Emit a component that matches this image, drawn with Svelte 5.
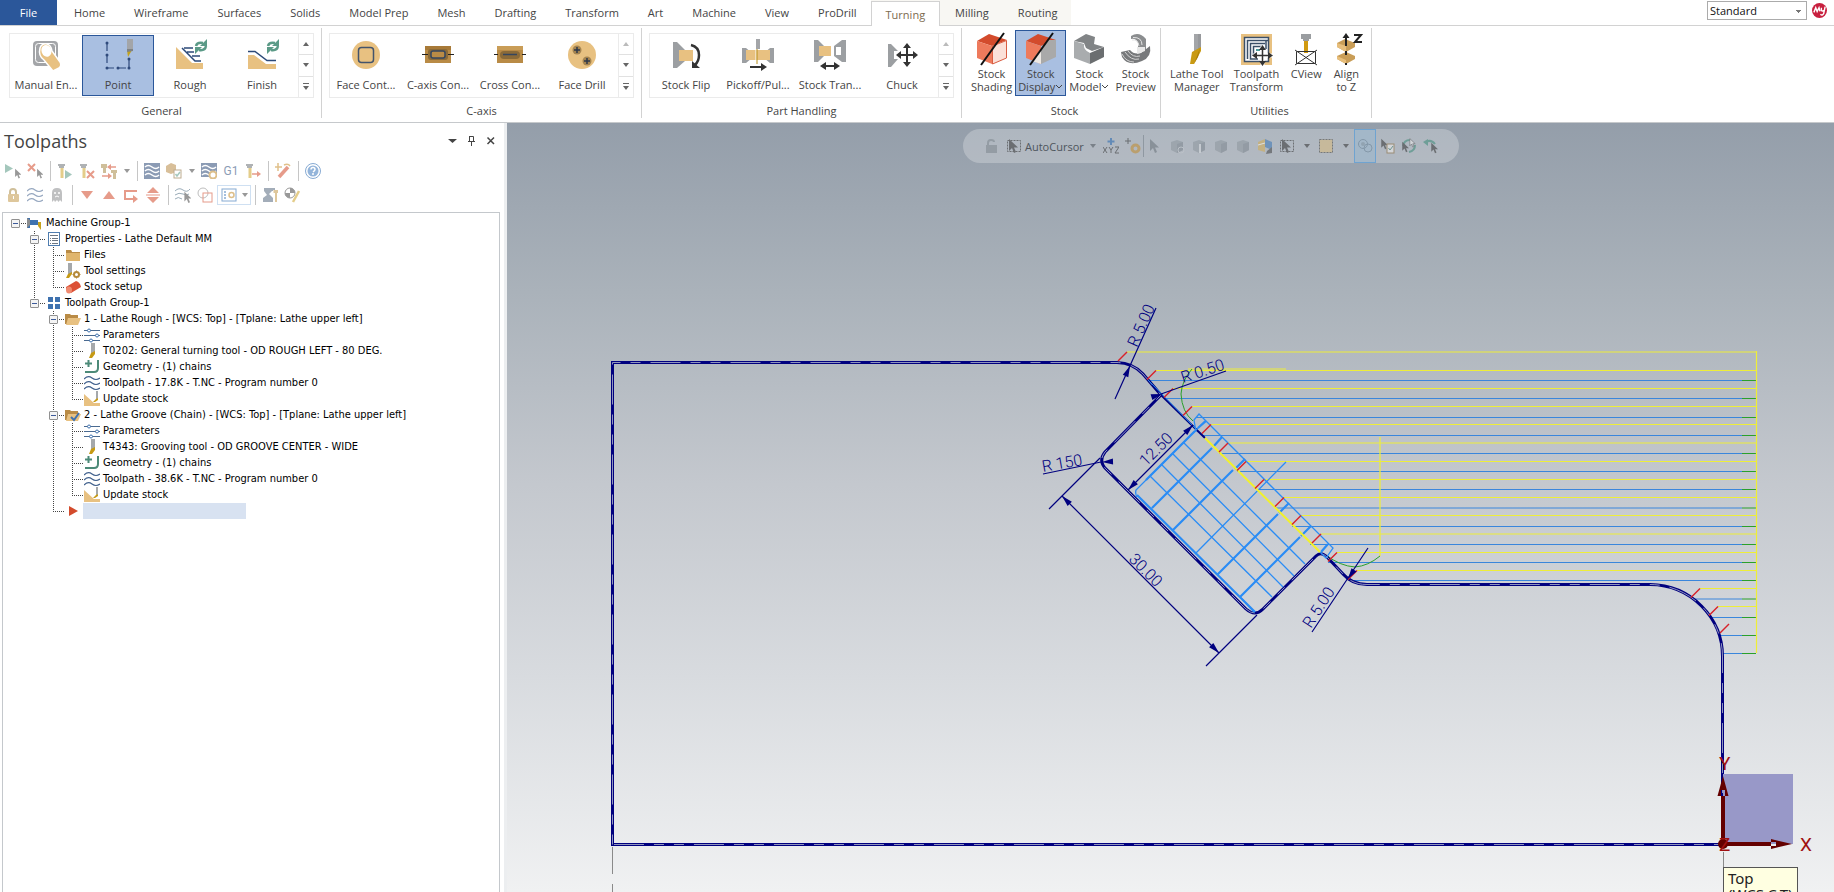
<script lang="ts">
  type Item = { icon: string; label: string; active?: boolean; menu?: boolean };
  type Row = { guides: string; icon: string; label: string; toggle?: boolean };

  const tabs = [
    'Home', 'Wireframe', 'Surfaces', 'Solids', 'Model Prep', 'Mesh', 'Drafting',
    'Transform', 'Art', 'Machine', 'View', 'ProDrill'
  ];
  const contextTabs = ['Turning', 'Milling', 'Routing'];
  let activeTab = $state('Turning');

  const galleries: { name: string; atTop: boolean; items: Item[] }[] = [
    {
      name: 'General',
      atTop: false,
      items: [
        { icon: 'manual', label: 'Manual En...' },
        { icon: 'point', label: 'Point', active: true },
        { icon: 'rough', label: 'Rough' },
        { icon: 'finish', label: 'Finish' }
      ]
    },
    {
      name: 'C-axis',
      atTop: true,
      items: [
        { icon: 'faceContour', label: 'Face Cont...' },
        { icon: 'caxisContour', label: 'C-axis Con...' },
        { icon: 'crossContour', label: 'Cross Con...' },
        { icon: 'faceDrill', label: 'Face Drill' }
      ]
    },
    {
      name: 'Part Handling',
      atTop: true,
      items: [
        { icon: 'stockFlip', label: 'Stock Flip' },
        { icon: 'pickoff', label: 'Pickoff/Pul...' },
        { icon: 'transfer', label: 'Stock Tran...' },
        { icon: 'chuck', label: 'Chuck' }
      ]
    }
  ];

  const stockItems: Item[] = [
    { icon: 'shading', label: 'Stock\nShading' },
    { icon: 'display', label: 'Stock\nDisplay', active: true, menu: true },
    { icon: 'model', label: 'Stock\nModel', menu: true },
    { icon: 'preview', label: 'Stock\nPreview' }
  ];
  const utilityItems: Item[] = [
    { icon: 'toolManager', label: 'Lathe Tool\nManager' },
    { icon: 'transform', label: 'Toolpath\nTransform' },
    { icon: 'cview', label: 'CView' },
    { icon: 'alignZ', label: 'Align\nto Z' }
  ];

  // '-' is a separator, 'v' a drop-down arrow
  const panelTools = [
    ['selectAll', 'selectDirty', '-', 'regenAll', 'regenDirty', 'regenSwap', 'v', '-', 'backplot', 'verify', 'v', 'simulate', 'post', 'feed', '-', 'wand', '-', 'help'],
    ['lock', 'waves', 'ghost', '-', 'down', 'up', 'insert', 'scroll', '-', 'onlySelected', 'onlyAssoc', 'options', '-', 'machineSim', 'checker']
  ];
  const cursorTools = [
    'arrow', 'cubeEdge', 'cubeFace', 'cube', 'cube', 'cubeColor', 'boxCursor', 'v',
    'window', 'v', 'rings', 'cursorCheck', 'cursorCycle', 'cursorBack'
  ];

  // guide cells: '.' blank, '|' through line, '+' branch, 'L' last branch, 'F' first
  const rows: Row[] = [
    { guides: 'F', icon: 'machine', label: 'Machine Group-1', toggle: true },
    { guides: '.+', icon: 'properties', label: 'Properties - Lathe Default MM', toggle: true },
    { guides: '.|+', icon: 'folder', label: 'Files' },
    { guides: '.|+', icon: 'toolGear', label: 'Tool settings' },
    { guides: '.|L', icon: 'stock', label: 'Stock setup' },
    { guides: '.L', icon: 'group', label: 'Toolpath Group-1', toggle: true },
    { guides: '..+', icon: 'folderOpen', label: '1 - Lathe Rough - [WCS: Top] - [Tplane: Lathe upper left]', toggle: true },
    { guides: '..|+', icon: 'params', label: 'Parameters' },
    { guides: '..|+', icon: 'tool', label: 'T0202: General turning tool - OD ROUGH LEFT - 80 DEG.' },
    { guides: '..|+', icon: 'geometry', label: 'Geometry - (1) chains' },
    { guides: '..|+', icon: 'waves', label: 'Toolpath - 17.8K - T.NC - Program number 0' },
    { guides: '..|L', icon: 'update', label: 'Update stock' },
    { guides: '..+', icon: 'folderCheck', label: '2 - Lathe Groove (Chain) - [WCS: Top] - [Tplane: Lathe upper left]', toggle: true },
    { guides: '..|+', icon: 'params', label: 'Parameters' },
    { guides: '..|+', icon: 'tool', label: 'T4343: Grooving tool - OD GROOVE CENTER - WIDE' },
    { guides: '..|+', icon: 'geometry', label: 'Geometry - (1) chains' },
    { guides: '..|+', icon: 'waves', label: 'Toolpath - 38.6K - T.NC - Program number 0' },
    { guides: '..|L', icon: 'update', label: 'Update stock' },
    { guides: '..L', icon: 'insertArrow', label: '' }
  ];

  // roughing passes: [y, start x]
  const rapids = [
    [352, 1127], [370.5, 1156], [388.5, 1173], [406.5, 1192], [424.5, 1211], [443, 1228],
    [461.5, 1246], [479.5, 1264], [497.5, 1284], [515.5, 1301], [534, 1321], [552.5, 1337],
    [570.5, 1357], [588.5, 1700], [606.5, 1718]
  ];
  const cuts = [
    [380.5, 1148], [398.5, 1165], [417.5, 1196], [435.5, 1203], [453.5, 1219], [471.5, 1237],
    [489.5, 1258], [508, 1276], [526.5, 1292], [544.5, 1310], [562.5, 1328], [580.5, 1354],
    [599, 1695], [617.5, 1711], [635.5, 1720], [653.5, 1723]
  ];
  const outline =
    'M612.500 844.500 V362.500 H1117 Q1133 363 1143 374 L1161 395 L1105 452 Q1098 461 1106 469 L1246 609 Q1255 617 1263 609 L1316 556 Q1321 551 1327 557 L1343 574 Q1352 584.500 1367 584.500 H1650 A73 72 0 0 1 1722.500 657 V844.500 Z';

  const arrowPath = 'M3 1 V13 L6 10 L8 15 L10 14 L8 9.500 H12 Z';
  const cubeBase =
    '<path d="M2 4 8 2 14 4V12L8 15 2 12Z" fill="#8d969e"/><path d="M8 6V15L14 12V4Z" fill="#7b858e"/>';
  const holder = '<path d="M1 1H8V3H7V5H2V3H1Z" fill="#6f7477"/><rect x="3.500" y="5" width="3" height="10" fill="#cfa52c"/>';
  const swirl =
    '<path d="M22 7Q23 3 29 4M32 7Q31 12 25 11" fill="none" stroke="#5b9a87" stroke-width="2.500"/><path d="M33 0V7H26ZM21 15V8H28Z" fill="#5b9a87"/>';

  const icons: Record<string, string> = {
    manual:
      '<rect x="3" y="2" width="25" height="25" rx="4" fill="#a3a5a8"/><rect x="5.500" y="4.500" width="20" height="19" rx="3" fill="none" stroke="#fff"/><path d="M10 9Q12 4 17 5Q21 6 22 12L30 23Q32 27 29 29L23 32L14 21Q8 17 10 9Z" fill="#e8c181" stroke="#fff" stroke-width="1.500"/><ellipse cx="16.500" cy="12" rx="5" ry="6" fill="#fff" transform="rotate(-20 16 12)"/>',
    point:
      '<path d="M5 4V29H27V20" fill="none" stroke="#2f4a7c" stroke-width="1.200" stroke-dasharray="8 4"/><g fill="#2f4a7c"><circle cx="5" cy="4" r="1.500"/><circle cx="5" cy="16" r="1.500"/><circle cx="5" cy="29" r="1.500"/><circle cx="16" cy="29" r="1.500"/><circle cx="27" cy="29" r="1.500"/><circle cx="27" cy="20" r="1.500"/></g><path d="M25 0H31V11L28 13 25 11Z" fill="#a3a5a8"/><path d="M25 11H30L26 18Z" fill="#c2a21c"/><path d="M25 10H31V12L25 13Z" fill="#7f8284"/>',
    rough:
      `<path d="M2 8 18 24H29V30H2Z" fill="#e8c181"/><path d="M8 9 21 22H27M10 9H19M13 13H20M18 17H26" fill="none" stroke="#2d4a78" stroke-width="1.500"/>${swirl}`,
    finish:
      `<path d="M2 16H8L20 25H30V30H2Z" fill="#e8c181"/><path d="M2 12.500H9L21 21.500H30" fill="none" stroke="#2d4a78" stroke-width="1.500"/>${swirl}`,
    faceContour:
      '<circle cx="16" cy="16" r="14" fill="#e8c181"/><rect x="8.500" y="8.500" width="15" height="15" rx="3" fill="none" stroke="#44546b" stroke-width="1.500"/>',
    caxisContour:
      '<rect x="3" y="7" width="26" height="17" fill="#b98b46"/><rect x="3" y="7" width="26" height="4" fill="#a87a38"/><rect x="6" y="10" width="20" height="11" rx="3" fill="#8a6a38"/><rect x="9" y="12" width="14" height="7" rx="2" fill="#b98b46" stroke="#34465f" stroke-width="1.500"/><path d="M0 15.500H6M26 15.500H32" stroke="#222"/>',
    crossContour:
      '<rect x="3" y="7" width="26" height="17" fill="#b98b46"/><rect x="3" y="7" width="26" height="4" fill="#c99d57"/><rect x="6" y="12" width="20" height="8" rx="4" fill="#8a6a38"/><path d="M9 15.500H23" stroke="#34465f" stroke-width="1.500"/><path d="M0 15.500H4M28 15.500H32" stroke="#222"/>',
    faceDrill:
      '<circle cx="16" cy="16" r="14" fill="#e8c181"/><circle cx="11" cy="11" r="4.500" fill="#a58450"/><circle cx="21" cy="22" r="4.500" fill="#a58450"/><path d="M11 8V14M8 11H14M21 19V25M18 22H24" stroke="#2d3748" stroke-width="1.500"/>',
    stockFlip:
      '<path d="M3 3H7L15 11V22L7 29H3Z" fill="#9c9fa2"/><rect x="9" y="11" width="14" height="11" fill="#e8c181"/><path d="M21 6Q29 8 29 16Q29 22 25 26" fill="none" stroke="#333" stroke-width="2.500"/><path d="M22 22V29H30Z" fill="#333"/>',
    pickoff:
      '<path d="M0 9H4L10 14V19L4 24H0ZM32 9H28L22 14V19L28 24H32Z" fill="#9c9fa2"/><rect x="4" y="11" width="24" height="10" fill="#e8c181"/><rect x="14" y="0" width="4" height="10" fill="#a3a5a8"/><path d="M14 10V25" stroke="#fff"/><path d="M15 10V25" stroke="#b8901a"/><path d="M8 28H20" stroke="#333" stroke-width="2"/><path d="M19 24 25 28 19 32Z" fill="#333"/>',
    transfer:
      '<path d="M0 1H4L10 7V17L4 23H0Z" fill="#9c9fa2"/><path d="M32 1H28L20 7V17L28 23H32ZM27 8V16H22V8Z" fill="#9c9fa2" fill-rule="evenodd"/><rect x="5" y="7" width="12" height="10" fill="#e8c181"/><path d="M9 27H23" stroke="#333" stroke-width="2"/><path d="M12 23V31L6 27ZM20 23V31L26 27Z" fill="#333"/>',
    chuck:
      '<path d="M2 5H5L12 12H8V20H12L5 28H2Z" fill="#9c9fa2"/><path d="M13 16H29M21 8V24" stroke="#333" stroke-width="2"/><path d="M17 9H25L21 4ZM17 23H25L21 28ZM15 12V20L10 16ZM27 12V20L32 16Z" fill="#333"/>',
    shading:
      '<path d="M1 8 13 1 31 7 16 13Z" fill="#d34b2c"/><path d="M1 8 16 13V31L1 25Z" fill="#ee7a5c"/><path d="M16.500 13 30.500 7.500V25L16.500 31Z" fill="#fbe0d8" stroke="#d95d42"/><path d="M5 32 28 0" stroke="#111" stroke-width="2"/>',
    display:
      '<path d="M1 8 13 1 31 7 16 13Z" fill="#d34b2c"/><path d="M1 8 16 13V31L1 25Z" fill="#ee7a5c"/><path d="M16 15 23 7 31 7V24L16 31Z" fill="#a9a9a9"/><path d="M16 16V31L7 28Z" fill="#ece8e4"/><path d="M5 32 28 0" stroke="#111" stroke-width="2"/>',
    model:
      '<path d="M1 8 13 1 22 4 21 11 31 14 19 18 13 15 11 10Z" fill="#818486"/><path d="M1 8 11 11Q10 17 17 20V31L1 25Z" fill="#a9acae"/><path d="M17 20 31 14V24L17 31Z" fill="#6b6e70"/>',
    preview:
      '<path d="M11 3Q19 -2 26 6V18H18V10Q16 5 11 6Z" fill="#8b8d8f"/><path d="M12 7Q18 6 19 13M13 4.500Q22 4 22 12" fill="none" stroke="#e4e4e4"/><path d="M1 19 10 17Q14 22 21 20L30 13Q32 24 22 28Q8 34 2 24Z" fill="#77797b"/><path d="M17 14H25V18L17 21Z" fill="#e8e8e8"/><path d="M2 21Q6 29 14 29M5 19Q11 28 19 26M8 18Q13 25 20 23" fill="none" stroke="#d2d2d2"/>',
    toolManager: '<path d="M13 1H20V16L13 20Z" fill="#a3a5a8"/><path d="M20 1V14L17 17V1Z" fill="#97999c"/><path d="M20 14V18L13 31H9L11 19Z" fill="#c99a12"/><path d="M19 15 17 24 13 31Z" fill="#a97c08"/>',
    transform:
      '<rect x="1" y="1" width="31" height="31" fill="#e8c181"/><rect x="4.500" y="4.500" width="24" height="24" fill="#fff" stroke="#3c5068" stroke-width="1.500"/><path d="M28 7.500H7.500V26M25 10.500H10.500V26H18M22 13.500H13.500V22H16M26 7.500V16" fill="none" stroke="#3c5068" stroke-width="1.500"/><path d="M16 17H20" stroke="#4d9c9c" stroke-width="2"/><path d="M13 22.500H32M22.500 13V32" stroke="#fff" stroke-width="4"/><path d="M15 22.500H30M22.500 15V30" stroke="#333" stroke-width="1.500"/><path d="M19 17H26L22.500 12ZM19 28H26L22.500 33ZM17 19V26L12 22.500ZM28 19V26L33 22.500Z" fill="#333"/>',
    cview:
      '<path d="M11 1H21V6H19V8H13V6H11Z" fill="#9a9da0"/><rect x="14" y="8" width="4" height="12" fill="#d09a10"/><path d="M6.500 18.500H25.500V30.500H6.500ZM5 17 27 32M27 17 5 32" fill="none" stroke="#333"/>',
    alignZ:
      '<path d="M7 10 15 6 25 10V14L16 19 7 14Z" fill="#c99d57"/><path d="M7 10 16 13V19L7 14Z" fill="#e7be7b"/><path d="M7 23 16 19 25 23V26L16 31 7 26Z" fill="#c99d57"/><path d="M7 23 16 27V31L7 26Z" fill="#e7be7b"/><path d="M16 5V13M16 18V22M16 30V32" stroke="#222" stroke-width="2"/><path d="M12.500 5H19.500L16 0Z" fill="#222"/><path d="M24 2H31L25 9H32" fill="none" stroke="#222" stroke-width="2"/>',

    selectAll: `<path d="M0 1 8 5.500 0 10Z" fill="#5b9a87"/><g transform="translate(8 5) scale(.7)"><path d="${arrowPath}" fill="#444"/></g>`,
    selectDirty: `<path d="M1 1 8 8M8 1 1 8" stroke="#d34b2c" stroke-width="2"/><g transform="translate(8 5) scale(.7)"><path d="${arrowPath}" fill="#444"/></g>`,
    regenAll: `${holder}<path d="M8 7 15 11.500 8 16Z" fill="#5b9a87"/>`,
    regenDirty: `${holder}<path d="M8 8 15 15M15 8 8 15" stroke="#d34b2c" stroke-width="2"/>`,
    regenSwap:
      '<path d="M0 1H6V5H5V10H2V5H0ZM10 7H16V10H15V16H12V10H10Z" fill="#a98c48"/><path d="M7 4H15M1 13H9" stroke="#d34b2c" stroke-width="1.500"/><path d="M10 1V7L6 4ZM7 10V16L11 13Z" fill="#d34b2c"/>',
    backplot:
      '<rect width="16" height="16" fill="#2d4a78"/><path d="M1 4Q4 1 8 4T15 4M1 8Q4 5 8 8T15 8M1 12Q4 9 8 12T15 12" fill="none" stroke="#fff" stroke-width="1.500"/>',
    verify:
      '<path d="M0 3 5 0 10 2V9L5 11 0 9Z" fill="#b98b46"/><rect x="8" y="7" width="7" height="8" fill="#fff" stroke="#8a6a38"/><path d="M9.500 11 11 13 14 9" fill="none" stroke="#5b9a87" stroke-width="1.500"/>',
    simulate:
      '<rect width="16" height="14" fill="#2d4a78"/><path d="M1 4Q4 1 8 4T15 4M1 8Q4 5 8 8T15 8M1 12Q4 9 8 12T15 12" fill="none" stroke="#fff" stroke-width="1.500"/><circle cx="12" cy="12" r="3.500" fill="#fff" stroke="#c28b2c" stroke-width="2"/>',
    feed: `${holder}<path d="M7 11H13" stroke="#d34b2c" stroke-width="1.500"/><path d="M12 8V14L16 11Z" fill="#d34b2c"/>`,
    wand: '<path d="M4 14 13 4" stroke="#d34b2c" stroke-width="3.500"/><path d="M3 0V8M0 4H7M9 2Q13 0 15 3" stroke="#c98f2c" fill="none" stroke-width="1.500"/>',
    help: '<circle cx="8" cy="8" r="7.500" fill="#fff" stroke="#2667b0"/><circle cx="8" cy="8" r="5.500" fill="#3c78bd"/><path d="M6 6.500Q6 4.500 8 4.500T10 6.500Q10 7.500 8 9" fill="none" stroke="#fff" stroke-width="1.500"/><circle cx="8" cy="11" r="1" fill="#fff"/>',
    lock: '<path d="M5 8V5Q5 2 8 2T11 5V8" fill="none" stroke="#a98c48" stroke-width="2"/><rect x="3" y="7" width="11" height="8" rx="1" fill="#c49a4c"/><rect x="8" y="9" width="1" height="3" fill="#fff"/>',
    waves:
      '<path d="M0 4Q4 0 8 3T16 3M0 9Q4 5 8 8T16 8M0 14Q4 10 8 13T16 13" fill="none" stroke="#3f5f8c" stroke-width="1.200"/>',
    ghost: '<path d="M3 15V6Q3 1 8 1T13 6V15L11 13 9.500 15 8 13 6 15 5 13Z" fill="#8b8d8f"/><circle cx="6" cy="6" r="1" fill="#fff"/><circle cx="10" cy="6" r="1" fill="#fff"/><path d="M6 10Q8 8 10 10" stroke="#fff" fill="none"/>',
    down: '<path d="M2 4H14L8 12Z" fill="#d34b2c"/>',
    up: '<path d="M2 12H14L8 4Z" fill="#d34b2c"/>',
    insert: '<path d="M14 4H2V12H11" fill="none" stroke="#d34b2c" stroke-width="2"/><path d="M10 8V16L15 12Z" fill="#d34b2c"/>',
    scroll: '<path d="M2 6H14L8 0ZM2 10H14L8 16ZM1 7.500H15V8.500H1Z" fill="#d34b2c"/>',
    onlySelected: `<path d="M0 4Q4 0 8 3T15 2M0 8Q4 5 8 7T14 7M0 12Q3 9 7 12" fill="none" stroke="#4a6a80"/><g transform="translate(7 4) scale(.8)"><path d="${arrowPath}" fill="#444"/></g>`,
    onlyAssoc: '<circle cx="6" cy="6" r="5" fill="none" stroke="#888"/><rect x="6" y="6" width="9" height="9" fill="none" stroke="#d34b2c"/>',
    options:
      '<rect x="1" y="2" width="14" height="12" fill="#fff" stroke="#2667b0"/><path d="M3 5H5M3 8H5M3 11H5" stroke="#2667b0" stroke-width="1.500"/><circle cx="10.500" cy="8" r="2.500" fill="none" stroke="#c28b2c" stroke-width="1.500"/>',
    machineSim:
      '<path d="M2 1H13V4H10L7 7 11 11V15H1V11L5 8 2 4Z" fill="#596b80"/><path d="M11 3H16V7H15V15H12V7H11Z" fill="#fff"/><path d="M11.500 3H16V6H15V15H13V6H11.500Z" fill="#c49a4c"/>',
    checker:
      '<circle cx="6" cy="6" r="5" fill="#fff" stroke="#444"/><path d="M6 6V1A5 5 0 0 1 11 6ZM6 6V11A5 5 0 0 1 1 6Z" fill="#444"/><path d="M15 4 9 15" stroke="#cfa52c" stroke-width="2.500"/>',

    machine: '<path d="M0 3H3V5H11V10H3V13H0Z" fill="#3f72af"/><path d="M0 3 3 5V10L0 13Z" fill="#8b8d8f"/><path d="M11 7H14V11L14 15 11 11Z" fill="#c6a21c"/>',
    properties:
      '<rect x="2.500" y="1.500" width="11" height="13" fill="#fff" stroke="#4f7db0"/><path d="M4 4.500H12M6 7.500H12M6 9.500H12M6 12.500H12M4 7.500H5M4 9.500H5M4 12.500H5" stroke="#6d7783"/>',
    folder: '<path d="M1 3H6L7 5H15V14H1Z" fill="#e0b56c"/><path d="M1 3H6L7 5H15V6H1Z" fill="#b98b46"/>',
    toolGear: '<path d="M3 0H7V10L3 12Z" fill="#a5a8ab"/><path d="M7 9V11L4 15H1L3 11Z" fill="#c69a14"/><circle cx="11.500" cy="11.500" r="2.500" fill="#fff" stroke="#b58a3c" stroke-width="2"/><path d="M11.500 7.500V15.500M7.500 11.500H15.500" stroke="#b58a3c" stroke-dasharray="1.500 5"/>',
    stock: '<path d="M1 8 11 2Q15 3 16 8L6 14Q1 14 1 8Z" fill="#dc5136"/><ellipse cx="4" cy="11" rx="3" ry="3.500" fill="#f08a70"/>',
    group: '<path d="M2 2H7V7H2ZM9 2H14V7H9ZM2 9H7V14H2ZM9 9H14V14H9Z" fill="#3f72af"/>',
    folderOpen: '<path d="M0 3H5L6 4H13V13H0Z" fill="#b98b46"/><path d="M3 7H16L13 14H1Z" fill="#e8c181"/>',
    folderCheck: '<path d="M0 3H5L6 4H13V13H0Z" fill="#b98b46"/><path d="M3 7H16L13 14H1Z" fill="#e8c181"/><path d="M6 10 9 13 14 6" fill="none" stroke="#3f72af" stroke-width="2"/>',
    params: '<path d="M0 3.500H16M0 8.500H16M0 13.500H16" stroke="#4a6a90"/><g fill="#fff" stroke="#3f72af"><circle cx="5" cy="3.500" r="1.500"/><circle cx="13" cy="8.500" r="1.500"/><circle cx="7" cy="13.500" r="1.500"/></g>',
    tool: '<path d="M7 0H11V9L7 11Z" fill="#a5a8ab"/><path d="M11 8V11L8 15H5L7 10Z" fill="#c69a14"/>',
    geometry: '<path d="M14 1V9Q14 13 10 13H1" fill="none" stroke="#4c8a78" stroke-width="2"/><path d="M4.500 1V8M1 4.500H8" stroke="#4c8a78" stroke-width="2"/>',
    update: '<path d="M0 3 10 12H16V15H0Z" fill="#e8c181"/><path d="M12 0H14V7L12 9Z" fill="#a5a8ab"/><path d="M14 7V9L11 11H9L12 8Z" fill="#c69a14"/>',
    insertArrow: '<path d="M4 3 13 8 4 13Z" fill="#d34b2c"/>',

    unlock: '<path d="M5 8V5Q5 2 8 2T11 4" fill="none" stroke="#7d868e" stroke-width="2"/><rect x="3" y="7" width="11" height="8" fill="#7d868e"/>',
    boxCursor: `<rect x="1.500" y="2.500" width="13" height="11" fill="none" stroke="#333" stroke-dasharray="2 1"/><path d="${arrowPath}" fill="#333"/>`,
    xyz: '<path d="M8 0V7M4.500 3.500H11.500" stroke="#2667b0" stroke-width="2"/><path d="M0 9 4 15M4 9 0 15M6 9 8 12V15M8 12 10 9M12 9H16L12 15H16" stroke="#333" fill="none"/>',
    plusGear: '<path d="M3 0V6M0 3H6" stroke="#333"/><circle cx="10.500" cy="10.500" r="3.500" fill="none" stroke="#c28b2c" stroke-width="3"/>',
    arrow: `<path d="${arrowPath}" fill="#69727a"/>`,
    cubeEdge: `${cubeBase}<circle cx="12" cy="12" r="3" fill="none" stroke="#c3c8cd"/>`,
    cubeFace: `${cubeBase}<path d="M9 6V15" stroke="#d6dade" stroke-width="2"/>`,
    cube: cubeBase,
    cubeColor: '<path d="M1 4 8 1V14L1 12Z" fill="#d3ac52"/><path d="M8 1 15 4V12L8 9Z" fill="#3a76b6"/><path d="M1 7 8 5" stroke="#fff"/><path d="M10 13 15 9V15L9 16Z" fill="#444"/>',
    window: '<rect x="1.500" y="1.500" width="13" height="13" fill="#d9bb7d" stroke="#444" stroke-dasharray="2 1"/>',
    rings: '<circle cx="6" cy="6" r="4.500" fill="none" stroke="#6b7f90"/><circle cx="11" cy="10" r="4" fill="none" stroke="#6b7f90"/><circle cx="6" cy="6" r="2" fill="#8494a0"/>',
    cursorCheck: `<g transform="scale(.75)"><path d="${arrowPath}" fill="#333"/></g><rect x="8" y="6" width="7" height="9" fill="#eee" stroke="#8a6a38"/><path d="M9.500 10 11 12 14 8" fill="none" stroke="#3a7a67"/>`,
    cursorCycle: `<path d="M2 8Q3 2 9 2M14 7Q14 13 8 14" fill="none" stroke="#3a8a77" stroke-width="2"/><g transform="translate(-1 3) scale(.75)"><path d="${arrowPath}" fill="#333"/></g><g transform="translate(7 0) scale(.6)"><path d="${arrowPath}" fill="#eee" stroke="#333"/></g>`,
    cursorBack: `<path d="M3 4Q8 1 12 6" fill="none" stroke="#3a8a77" stroke-width="2"/><path d="M0 4 5 1V8Z" fill="#3a8a77"/><g transform="translate(6 4) scale(.75)"><path d="${arrowPath}" fill="#333"/></g>`
  };
</script>

{#snippet large(name: string)}
  <svg class="icon-large" viewBox="0 0 32 32" aria-hidden="true">{@html icons[name]}</svg>
{/snippet}

{#snippet small(name: string)}
  <svg class="icon-small" viewBox="0 0 16 16" aria-hidden="true">{@html icons[name]}</svg>
{/snippet}

{#snippet caret()}
  <svg class="caret" viewBox="0 0 6 4" aria-hidden="true"><path d="M0 0H6L3 4Z" fill="currentColor" /></svg>
{/snippet}

{#snippet bigButtons(items: Item[])}
  {#each items as item}
    <button type="button" class="big-button" class:active={item.active}>
      {@render large(item.icon)}
      <span class="big-label">{item.label}{#if item.menu}<svg class="chevron" viewBox="0 0 7 5" aria-hidden="true"><path d="M0 1 3 4 6 1" fill="none" stroke="currentColor" /></svg>{/if}</span>
    </button>
  {/each}
{/snippet}

{#snippet label(x: number, y: number, angle: number, text: string)}
  <text class="dim-text" transform="translate({x} {y}) rotate({angle})">{text}</text>
{/snippet}

{#snippet head(x: number, y: number, angle: number)}
  <path class="dim-head" d="M0 0 L-11 -3 V3 Z" transform="translate({x} {y}) rotate({angle})" />
{/snippet}

<div class="app">
  <header>
    <nav class="tabs">
      <button type="button" class="file-tab">File</button>
      {#each tabs as tab}
        <button type="button" class="tab" onclick={() => (activeTab = tab)}>{tab}</button>
      {/each}
      <div class="context-tabs">
        {#each contextTabs as tab}
          <button type="button" class="tab" class:current={tab === activeTab} onclick={() => (activeTab = tab)}>{tab}</button>
        {/each}
      </div>
      <div class="tabs-end">
        <select aria-label="Ribbon layout"><option>Standard</option></select>
        <svg class="brand" viewBox="0 0 16 16" aria-hidden="true">
          <circle cx="8" cy="8" r="8" fill="#c8203f" />
          <path d="M2 10 4 5 5.500 9 7.500 5 8.500 9M10 5V8Q11 9 13 8M14 4 12.500 11Q11 14 9 12" fill="none" stroke="#fff" stroke-width="1.500" />
        </svg>
      </div>
    </nav>

    <div class="ribbon">
      {#each galleries as gallery}
        <section class="group">
          <div class="gallery">
            {#each gallery.items as item}
              <button type="button" class="gallery-item" class:active={item.active}>
                {@render large(item.icon)}
                <span>{item.label}</span>
              </button>
            {/each}
            <div class="spinner">
              <button type="button" aria-label="Previous row" class:dim={gallery.atTop}>
                <svg class="caret" viewBox="0 0 6 4"><path d="M0 4H6L3 0Z" fill="currentColor" /></svg>
              </button>
              <button type="button" aria-label="Next row">{@render caret()}</button>
              <button type="button" aria-label="More">
                <svg class="more" viewBox="0 0 6 7"><path d="M0 0H6V1H0ZM0 3H6L3 7Z" fill="currentColor" /></svg>
              </button>
            </div>
          </div>
          <h2>{gallery.name}</h2>
        </section>
      {/each}
      <section class="group stock-group">
        <div class="big-row">{@render bigButtons(stockItems)}</div>
        <h2>Stock</h2>
      </section>
      <section class="group utility-group">
        <div class="big-row">{@render bigButtons(utilityItems)}</div>
        <h2>Utilities</h2>
      </section>
    </div>
  </header>

  <main>
    <aside>
      <div class="panel-head">
        <h1>Toolpaths</h1>
        <button type="button" aria-label="Panel menu">
          <svg viewBox="0 0 10 10"><path d="M0 3H9L4.500 7Z" fill="#444" /></svg>
        </button>
        <button type="button" aria-label="Pin panel">
          <svg viewBox="0 0 10 10"><path d="M2.500 .500H6.500V5.500M2.500 0V5.500M1 5.500H8M4.500 6V10" fill="none" stroke="#444" /></svg>
        </button>
        <button type="button" aria-label="Close panel">
          <svg viewBox="0 0 10 10"><path d="M1.500 1.500 8 8M8 1.500 1.500 8" fill="none" stroke="#444" stroke-width="1.500" /></svg>
        </button>
      </div>

      {#each panelTools as line}
        <div class="tool-row">
          {#each line as tool}
            {#if tool === '-'}
              <span class="separator"></span>
            {:else if tool === 'v'}
              <button type="button" class="tool-caret" aria-label="More options">{@render caret()}</button>
            {:else if tool === 'options'}
              <button type="button" class="tool boxed" aria-label="Display options">{@render small(tool)}{@render caret()}</button>
            {:else if tool === 'post'}
              <button type="button" class="tool post">G1</button>
            {:else}
              <button type="button" class="tool" aria-label={tool}>{@render small(tool)}</button>
            {/if}
          {/each}
        </div>
      {/each}

      <ul class="tree">
        {#each rows as row}
          <li>
            {#each row.guides as guide, i}
              <span
                class="guide"
                class:through={guide === '|' || guide === '+'}
                class:last={guide === 'L'}
                class:branch={guide === '+' || guide === 'L' || guide === 'F'}
              >
                {#if row.toggle && i === row.guides.length - 1}
                  <button type="button" class="toggle" aria-label="Collapse {row.label}"></button>
                {/if}
              </span>
            {/each}
            <span class="node-icon">{@render small(row.icon)}</span>
            {#if row.label}
              <span class="node-label">{row.label}</span>
            {:else}
              <span class="insert-bar"></span>
            {/if}
          </li>
        {/each}
      </ul>
    </aside>

    <div class="viewport">
      <svg class="drawing" viewBox="507 123 1327 769" preserveAspectRatio="xMinYMin slice">
        <g class="aux">
          <path d="M612.500 847V874M612.500 884V892M1723.500 852V882" />
        </g>

        <g class="cut">
          {#each cuts as [y, x]}
            <path d="M{x} {y}H1742" />
            <path class="exit" d="M1742 {y}H1756" />
          {/each}
        </g>
        <g class="rapid">
          {#each rapids as [y, x]}
            <path d="M{x} {y}H1756" />
          {/each}
          <path d="M1756.500 351V653M1188 369H1286M1380 437V556" />
        </g>
        <path class="exit" d="M1192 369Q1182 380 1181 394Q1182 412 1193 421M1326 555Q1340 566 1355 567Q1368 566 1380 556" />

        <path class="outline" d={outline} />
        <path class="outline-core" d={outline} />
        <path class="chain" d="M1161 395L1205 438" />
        <path class="chain-hot" d="M1148 380L1196 429" />

        <g class="groove">
          <path d="M1205 420L1199 414L1194 420L1196 432M1199 414L1333 548L1326 558L1320 552" />
          <path class="bold" d="M1195 431L1146 480M1212 448L1152 508M1233 470L1173 530M1278 514L1218 574M1300 537L1240 597M1137 495L1255 612" />
          <path d="M1195 431L1136 490Q1135 494 1137 497M1286 462L1195 554M1195 431L1205 421M1183 442L1305 564M1172 453L1294 576M1161 464L1283 587M1150 476L1272 597M1240 597L1254 612" />
          <path class="bold" d="M1198 428L1206 421M1213 447L1222 437M1235 469L1245 459M1279 513L1289 503M1301 536L1311 526M1321 552L1328 544" />
        </g>
        <path class="chain-rapid" d="M1205 438L1320 552" />
        <g class="entry">
          {#each rapids as [y, x]}
            <path d="M{x - 9} {y + 9}L{x} {y}" />
          {/each}
          <path d="M1720 633L1729 624" />
        </g>

        <g class="dimension">
          <path d="M1062 496L1219 653M1100 458L1049 509M1257 615L1206 666" />
          <path d="M1193 425L1128 490M1043 474L1101 462M1226 371L1161 394" />
          <path d="M1156 308L1115 399M1368 548L1312 632" />
          {@render head(1062, 496, 225)}
          {@render head(1219, 653, 45)}
          {@render head(1193, 425, -45)}
          {@render head(1128, 490, 135)}
          {@render head(1102, 462, 178)}
          {@render head(1162, 394, -17)}
          {@render head(1130, 366, -66)}
          {@render head(1348, 579, 123)}
          {@render label(1128, 560, 45, '30.00')}
          {@render label(1146, 467, -45, '12.50')}
          {@render label(1043, 472, -10, 'R 150')}
          {@render label(1183, 383, -18, 'R 0.50')}
          {@render label(1137, 348, -66, 'R 5.00')}
          {@render label(1311, 629, -57, 'R 5.00')}
        </g>

        <g class="gnomon">
          <rect x="1723" y="774" width="70" height="70" />
          <path d="M1721 844V790H1725V844ZM1717.500 796H1728.500L1723 776ZM1723 842H1776V846H1723ZM1771 839V849L1792 844Z" />
          <circle cx="1723" cy="844" r="5" />
          <text x="1719" y="770">Y</text>
          <text x="1800" y="851">X</text>
          <text x="1719" y="851">Z</text>
        </g>
      </svg>

      <div class="cursor-bar">
        <button type="button" class="tool" aria-label="Lock cursor">{@render small('unlock')}</button>
        <button type="button" class="autocursor">{@render small('boxCursor')}<span>AutoCursor</span>{@render caret()}</button>
        <button type="button" class="tool" aria-label="Fast point">{@render small('xyz')}</button>
        <button type="button" class="tool divided" aria-label="Cursor settings">{@render small('plusGear')}</button>
        {#each cursorTools as tool}
          {#if tool === 'v'}
            <button type="button" class="tool-caret" aria-label="More options">{@render caret()}</button>
          {:else}
            <button type="button" class="tool" class:pressed={tool === 'rings'} aria-label={tool}>{@render small(tool)}</button>
          {/if}
        {/each}
      </div>

      <div class="tooltip" role="tooltip">Top<br />(WCS,C,T)</div>
    </div>
  </main>
</div>

<style>
  :global(body) {
    background: #fff;
    overflow: hidden;
  }
  .app {
    display: flex;
    flex-direction: column;
    height: 100vh;
    overflow: hidden;
    color: #444;
    font-family: 'Open Sans', 'Noto Sans', sans-serif;
    font-size: 11px;
  }
  button {
    padding: 0;
    border: 0;
    background: none;
    color: inherit;
    font: inherit;
  }
  h1,
  h2 {
    margin: 0;
    font-weight: 400;
  }
  svg {
    display: block;
    flex: none;
  }
  .icon-large {
    width: 32px;
    height: 32px;
    overflow: visible;
  }
  .icon-small {
    width: 16px;
    height: 16px;
  }
  .caret {
    width: 6px;
    height: 4px;
  }
  .more {
    width: 6px;
    height: 7px;
  }

  /* tab strip */
  .tabs {
    display: flex;
    height: 25px;
    border-bottom: 1px solid #d2d2d2;
  }
  .file-tab {
    width: 57px;
    margin-right: 2px;
    background: #2b579a;
    color: #fff;
  }
  .tab {
    height: 25px;
    padding: 0 14px 0 15px;
  }
  .context-tabs {
    display: flex;
    background: #f8f7f3;
  }
  .tab.current {
    height: 25px;
    margin-top: 1px;
    padding: 0 14px;
    border: 1px solid #d2d2d2;
    border-bottom: 0;
    background: #fff;
    color: #7d6b50;
  }
  .tabs-end {
    display: flex;
    align-items: flex-start;
    gap: 5px;
    margin-left: auto;
    padding: 1px 7px 0 0;
  }
  select {
    width: 100px;
    height: 19px;
    padding: 0 0 0 2px;
    border: 1px solid #ababab;
    appearance: none;
    background:
      linear-gradient(#777, #777) right 5px top 8px / 5px 1px no-repeat,
      linear-gradient(#777, #777) right 6px top 9px / 3px 1px no-repeat,
      linear-gradient(#777, #777) right 7px top 10px / 1px 1px no-repeat,
      #fff;
    color: #111;
    font: inherit;
  }
  .brand {
    width: 15px;
    height: 15px;
    margin-top: 2px;
  }

  /* ribbon */
  .ribbon {
    display: flex;
    height: 96px;
    border-bottom: 1px solid #c6c9cc;
  }
  .group {
    position: relative;
    box-sizing: border-box;
    display: flex;
    flex-direction: column;
    width: 320px;
    padding: 7px 8px 0 7px;
  }
  .group::after {
    content: '';
    position: absolute;
    top: 2px;
    right: 0;
    bottom: 4px;
    width: 1px;
    background: #d2d2d2;
  }
  .group:first-child {
    width: 322px;
    padding-left: 9px;
  }
  .group h2 {
    margin-top: auto;
    padding-bottom: 3px;
    font-size: 11px;
    line-height: 16px;
    text-align: center;
  }
  .gallery {
    box-sizing: border-box;
    display: flex;
    height: 65px;
    padding-top: 1px;
    border: 1px solid #ebebeb;
  }
  .gallery-item {
    box-sizing: border-box;
    display: flex;
    flex: 1;
    flex-direction: column;
    align-items: center;
    height: 61px;
    padding-top: 3px;
    gap: 6px;
    border: 1px solid transparent;
    line-height: 16px;
    white-space: nowrap;
  }
  .gallery-item.active,
  .big-button.active {
    border-color: #2b579a;
    background: #a9bfe1;
  }
  .spinner {
    display: flex;
    flex-direction: column;
    width: 14px;
    margin-top: -1px;
    border-left: 1px solid #ebebeb;
    color: #666;
  }
  .spinner button {
    display: grid;
    flex: 1;
    place-items: center;
  }
  .spinner button + button {
    border-top: 1px solid #e1e1e1;
  }
  .spinner .dim {
    color: #bbb;
  }
  .stock-group {
    width: 199px;
    padding: 4px 0 0 6px;
  }
  .utility-group {
    width: 211px;
    padding: 4px 0 0 6px;
  }
  .big-row {
    display: flex;
    height: 66px;
  }
  .big-button {
    box-sizing: border-box;
    display: flex;
    flex-direction: column;
    align-items: center;
    min-width: 40px;
    padding: 2px 2px 0;
    gap: 2px;
    border: 1px solid transparent;
    line-height: 13px;
  }
  .big-label {
    white-space: pre;
  }
  .chevron {
    display: inline-block;
    width: 7px;
    height: 5px;
    margin: 0 0 2px 1px;
  }

  /* toolpath manager */
  main {
    display: flex;
    flex: 1;
    min-height: 0;
  }
  aside {
    box-sizing: border-box;
    display: flex;
    flex-direction: column;
    flex: none;
    width: 507px;
    padding-right: 4px;
    border-right: 3px solid #eceef0;
  }
  .panel-head {
    display: flex;
    align-items: center;
    height: 36px;
    padding: 0 0 0 4px;
  }
  .panel-head h1 {
    margin-right: auto;
    font-size: 18px;
    line-height: 24px;
  }
  .panel-head button {
    display: grid;
    width: 19px;
    place-items: center;
  }
  .panel-head svg {
    width: 10px;
    height: 10px;
  }
  .tool-row {
    display: flex;
    align-items: center;
    height: 24px;
    padding-left: 2px;
    opacity: 0.55;
  }
  .tool {
    box-sizing: border-box;
    display: grid;
    width: 22px;
    height: 22px;
    place-items: center;
  }
  .tool-caret {
    display: grid;
    width: 13px;
    height: 22px;
    place-items: center;
  }
  .separator {
    width: 1px;
    height: 20px;
    margin: 0 3px 0 4px;
    background: #999;
  }
  .boxed {
    display: flex;
    align-items: center;
    justify-content: center;
    gap: 5px;
    width: 34px;
    height: 20px;
    margin-left: 1px;
    border: 1px solid #a8c8e8;
  }
  .post {
    color: #2d4a78;
    font-family: Roboto, sans-serif;
    font-size: 12px;
  }
  .tree {
    flex: 1;
    margin: 5px 0 0 2px;
    padding: 2px 0 0 3px;
    border: 1px solid #c4c8cc;
    border-bottom: 0;
    list-style: none;
    color: #000;
    font-family: 'DejaVu Sans Condensed', 'DejaVu Sans', sans-serif;
    font-size: 11px;
  }
  .tree li {
    display: flex;
    align-items: center;
    height: 16px;
    white-space: nowrap;
  }
  .guide {
    position: relative;
    width: 19px;
    height: 16px;
  }
  .through::before,
  .last::before {
    content: '';
    position: absolute;
    top: 0;
    left: 9px;
    width: 1px;
    height: 16px;
    background: repeating-linear-gradient(#444 0 1px, transparent 1px 2px);
  }
  .last::before {
    height: 8px;
  }
  .branch::after {
    content: '';
    position: absolute;
    top: 8px;
    left: 9px;
    width: 11px;
    height: 1px;
    background: repeating-linear-gradient(90deg, #444 0 1px, transparent 1px 2px);
  }
  .toggle {
    position: absolute;
    z-index: 1;
    top: 4px;
    left: 5px;
    width: 9px;
    height: 9px;
    border: 1px solid #919191;
    border-radius: 1px;
    background: linear-gradient(#3c5a9a, #3c5a9a) center / 5px 1px no-repeat, #f4f4f4;
  }
  .node-icon {
    display: grid;
    width: 19px;
    place-items: center;
  }
  .node-label {
    margin-left: 2px;
    line-height: 16px;
  }
  .insert-bar {
    width: 163px;
    height: 16px;
    margin-left: 1px;
    background: #d8e2f1;
  }

  /* graphics area */
  .viewport {
    position: relative;
    flex: 1;
    overflow: hidden;
    background: linear-gradient(#949eaa, #aab2ba 22%, #c4c8ce 47%, #d8dbdf 72%, #f0f1f2);
  }
  .drawing {
    position: absolute;
    inset: 0;
    width: 100%;
    height: 100%;
    fill: none;
  }
  .aux {
    stroke: #8a8a8a;
  }
  .cut {
    stroke: #3a86dc;
  }
  .rapid {
    stroke: #eeee38;
    stroke-width: 1.2;
  }
  .entry {
    stroke: #d8222a;
    stroke-width: 1.4;
  }
  .exit {
    stroke: #2aa02a;
  }
  .outline {
    stroke: #00007f;
    stroke-width: 3;
  }
  .outline-core {
    stroke: #9094bc;
    stroke-dasharray: 10 10 10 10 30 10;
  }
  .chain {
    stroke: #00007f;
    stroke-width: 2;
  }
  .chain-hot {
    stroke: #1e86f0;
  }
  .chain-rapid {
    stroke: #f2f22a;
    stroke-width: 2;
  }
  .groove {
    stroke: #2a8cf5;
    stroke-width: 1.3;
  }
  .groove .bold {
    stroke-width: 2.2;
  }
  .dimension {
    stroke: #00007f;
    stroke-width: 1.2;
  }
  .dim-head,
  .dim-text {
    fill: #00007f;
    stroke: none;
  }
  .dim-text {
    font: 300 16px Roboto, 'Liberation Sans', sans-serif;
  }
  .gnomon {
    fill: #640000;
    font: 19px Roboto, sans-serif;
  }
  .gnomon rect {
    fill: #9898c8;
  }
  .gnomon text {
    fill: #a01010;
  }
  .cursor-bar {
    position: absolute;
    top: 6px;
    left: 456px;
    box-sizing: border-box;
    display: flex;
    align-items: center;
    height: 34px;
    padding: 0 17px;
    border-radius: 17px;
    background: rgba(255, 255, 255, 0.25);
    color: #333;
  }
  .cursor-bar svg {
    opacity: 0.55;
  }
  .cursor-bar .tool-caret {
    width: 17px;
  }
  .autocursor {
    display: flex;
    align-items: center;
    gap: 3px;
    width: 98px;
    padding: 0 4px;
    color: #4e555c;
    font-size: 11px;
  }
  .autocursor .caret {
    margin-left: auto;
  }
  .divided {
    border-right: 1px solid #8f98a1;
  }
  .pressed {
    height: 34px;
    border: 1px solid #6fa3d0;
    background: #a3b7c8;
  }
  .tooltip {
    position: absolute;
    top: 744px;
    left: 1216px;
    padding: 2px 4px;
    border: 1px solid #555;
    background: #ffffe1;
    color: #222;
    font: 15px/16px 'Noto Sans', sans-serif;
  }
</style>
